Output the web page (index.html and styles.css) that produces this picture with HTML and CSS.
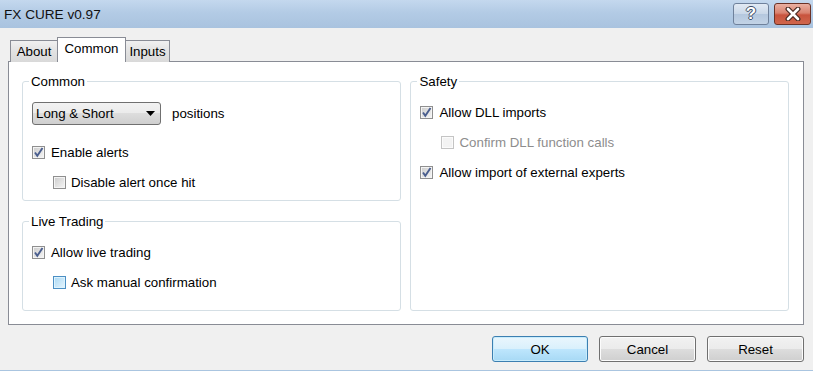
FILE: index.html
```html
<!DOCTYPE html>
<html lang="en">
<head>
    <meta charset="UTF-8">
    <title>FX CURE v0.97</title>
    <link rel="stylesheet" href="styles.css">
</head>
<body>
    <div class="window">
        <div class="titlebar">
            <span class="title">FX CURE v0.97</span>
            <div class="caption-buttons">
                <span class="cap-btn help">?</span>
                <span class="cap-btn close">
                    <svg width="18" height="14" viewBox="0 0 18 14">
                        <path d="M4 2 L14 12 M14 2 L4 12" stroke="#4a2a22" stroke-width="5" stroke-linecap="round"/>
                        <path d="M4 2 L14 12 M14 2 L4 12" stroke="#fff" stroke-width="2.6" stroke-linecap="round"/>
                    </svg>
                </span>
            </div>
        </div>

        <div class="client">
            <div class="tabs">
                <span class="tab tab-about">About</span>
                <span class="tab tab-common active">Common</span>
                <span class="tab tab-inputs">Inputs</span>
            </div>

            <div class="panel">
                <div class="col">
                    <fieldset class="group group-common">
                        <legend>Common</legend>
                        <div class="select-row">
                            <div class="select">
                                <span>Long &amp; Short</span>
                                <svg width="9" height="5" viewBox="0 0 9 5"><polygon points="0,0 9,0 4.5,5" fill="#000"/></svg>
                            </div>
                            <span>positions</span>
                        </div>
                        <div class="check">
                            <span class="box checked"><svg width="13" height="13" viewBox="0 0 13 13"><path d="M3 6.5 L5.3 9.8 L10.5 2" fill="none" stroke="#4a5e8e" stroke-width="1.9"/></svg></span>
                            <span>Enable alerts</span>
                        </div>
                        <div class="check sub">
                            <span class="box"></span>
                            <span>Disable alert once hit</span>
                        </div>
                    </fieldset>

                    <fieldset class="group group-live">
                        <legend>Live Trading</legend>
                        <div class="check">
                            <span class="box checked"><svg width="13" height="13" viewBox="0 0 13 13"><path d="M3 6.5 L5.3 9.8 L10.5 2" fill="none" stroke="#4a5e8e" stroke-width="1.9"/></svg></span>
                            <span>Allow live trading</span>
                        </div>
                        <div class="check sub">
                            <span class="box hover"></span>
                            <span>Ask manual confirmation</span>
                        </div>
                    </fieldset>
                </div>

                <fieldset class="group group-safety">
                    <legend>Safety</legend>
                    <div class="check">
                        <span class="box checked"><svg width="13" height="13" viewBox="0 0 13 13"><path d="M3 6.5 L5.3 9.8 L10.5 2" fill="none" stroke="#4a5e8e" stroke-width="1.9"/></svg></span>
                        <span>Allow DLL imports</span>
                    </div>
                    <div class="check sub disabled">
                        <span class="box"></span>
                        <span>Confirm DLL function calls</span>
                    </div>
                    <div class="check">
                        <span class="box checked"><svg width="13" height="13" viewBox="0 0 13 13"><path d="M3 6.5 L5.3 9.8 L10.5 2" fill="none" stroke="#4a5e8e" stroke-width="1.9"/></svg></span>
                        <span>Allow import of external experts</span>
                    </div>
                </fieldset>
            </div>

            <div class="actions">
                <button class="btn default">OK</button>
                <button class="btn">Cancel</button>
                <button class="btn">Reset</button>
            </div>
        </div>
    </div>
</body>
</html>
```

FILE: styles.css
```css
html, body {
    margin: 0;
    padding: 0;
}
body {
    font-family: "Liberation Sans", Arial, sans-serif;
    font-size: 13.3px;
    color: #000;
    background: #f0f0f0;
}
.window {
    width: 813px;
    height: 371px;
    box-sizing: border-box;
    border-bottom: 1px solid #aac5e0;
    background: #f0f0f0;
}

/* title bar */
.titlebar {
    height: 28px;
    display: flex;
    align-items: center;
    justify-content: space-between;
    background: linear-gradient(#c4d8ee, #b3cbe5 45%, #a9c3df);
}
.title {
    padding-left: 4px;
    font-size: 13.6px;
    color: #111;
}
.caption-buttons {
    display: flex;
    gap: 5px;
    align-self: flex-start;
    margin-top: 3px;
    margin-right: 2px;
}
.cap-btn {
    height: 22px;
    box-sizing: border-box;
    border-radius: 3px;
    display: flex;
    align-items: center;
    justify-content: center;
}
.help {
    width: 36px;
    border: 1px solid #6f819b;
    background: linear-gradient(#e2eaf4, #c9d7e8 50%, #b4c7de 50%, #c3d3e6);
    color: #fff;
    font-weight: bold;
    font-size: 17px;
    text-shadow: -1px 0 #3c4d66, 1px 0 #3c4d66, 0 -1px #3c4d66, 0 1px #3c4d66;
}
.close {
    width: 37px;
    border: 1px solid #6b3226;
    background: linear-gradient(#eab0a2, #d9826f 45%, #c8533d 55%, #d0664c);
}

/* client area */
.client {
    padding: 9px 9px 0 8px;
}
.tabs {
    display: flex;
    align-items: flex-end;
    margin-left: 2px;
    margin-bottom: -1px;
    position: relative;
    z-index: 1;
}
.tab {
    height: 22px;
    box-sizing: border-box;
    border: 1px solid #898c95;
    border-bottom: none;
    background: linear-gradient(#f0f0f0, #e2e2e2 50%, #d9d9d9);
    display: flex;
    align-items: center;
    justify-content: center;
}
.tab-about {
    width: 48px;
}
.tab-common {
    width: 69px;
    margin-left: -1px;
}
.tab-inputs {
    width: 45px;
    margin-left: -1px;
}
.tab.active {
    height: 25px;
    background: #fff;
    padding-bottom: 3px;
}

.panel {
    height: 264px;
    box-sizing: border-box;
    border: 1px solid #898c95;
    background: #fff;
    padding: 12px 14px 13px 13px;
    display: flex;
    gap: 9px;
}
.col {
    width: 380px;
    display: flex;
    flex-direction: column;
    gap: 13px;
}

/* group boxes */
.group {
    margin: 0;
    border: 1px solid #d5dfe5;
    border-radius: 3px;
    padding: 0 9px;
    min-width: 0;
}
.group legend {
    margin-left: -3px;
    padding: 0 2px;
    line-height: 15px;
    color: #000;
}
.group-common {
    height: 127px;
    box-sizing: border-box;
    padding-top: 13px;
}
.group-live {
    flex: 1;
    padding-top: 8px;
}
.group-safety {
    width: 379px;
    box-sizing: border-box;
    padding-top: 8px;
}

.select-row {
    display: flex;
    align-items: center;
    gap: 11px;
    margin-bottom: 12px;
}
.select {
    width: 129px;
    height: 23px;
    box-sizing: border-box;
    border: 1px solid #707070;
    border-radius: 3px;
    background: linear-gradient(#f2f2f2, #ebebeb 50%, #dddddd 50%, #cfcfcf);
    display: flex;
    align-items: center;
    justify-content: space-between;
    padding: 0 5px 0 3px;
}

/* checkboxes */
.check {
    height: 30px;
    display: flex;
    align-items: center;
    gap: 6px;
}
.check.sub {
    padding-left: 21px;
    gap: 5px;
}
.check.disabled {
    color: #8d8d8d;
}
.box {
    width: 13px;
    height: 13px;
    box-sizing: border-box;
    border: 1px solid #8f8f8f;
    box-shadow: inset 0 0 0 1px #f4f4f4;
    background: linear-gradient(135deg, #cbcbcb, #f6f6f6);
    display: flex;
    overflow: visible;
}
.box svg {
    margin: -1px;
    flex: none;
}
.box.hover {
    border-color: #4c8fc4;
    box-shadow: inset 0 0 0 1px #def3fd;
    background: linear-gradient(135deg, #a9d8f4, #e6f5fd);
}
.disabled .box {
    border-color: #c4c4c4;
    box-shadow: inset 0 0 0 1px #fbfbfb;
    background: #f3f3f3;
}

/* buttons */
.actions {
    display: flex;
    justify-content: flex-end;
    gap: 11px;
    padding-top: 11px;
}
.btn {
    width: 97px;
    height: 26px;
    box-sizing: border-box;
    border: 1px solid #707070;
    border-radius: 3px;
    background: linear-gradient(#f2f2f2, #ebebeb 50%, #dddddd 50%, #cfcfcf);
    box-shadow: inset 0 0 0 1px #fcfcfc;
    font-family: "Liberation Sans", Arial, sans-serif;
    font-size: 13.3px;
    color: #000;
    padding: 0;
}
.btn.default {
    width: 96px;
    border-color: #3c7fb1;
    background: linear-gradient(#eaf6fd, #d9f0fc 50%, #bee6fd 50%, #a7d9f5);
    box-shadow: inset 0 0 0 1px #c8ecfc;
}
```
